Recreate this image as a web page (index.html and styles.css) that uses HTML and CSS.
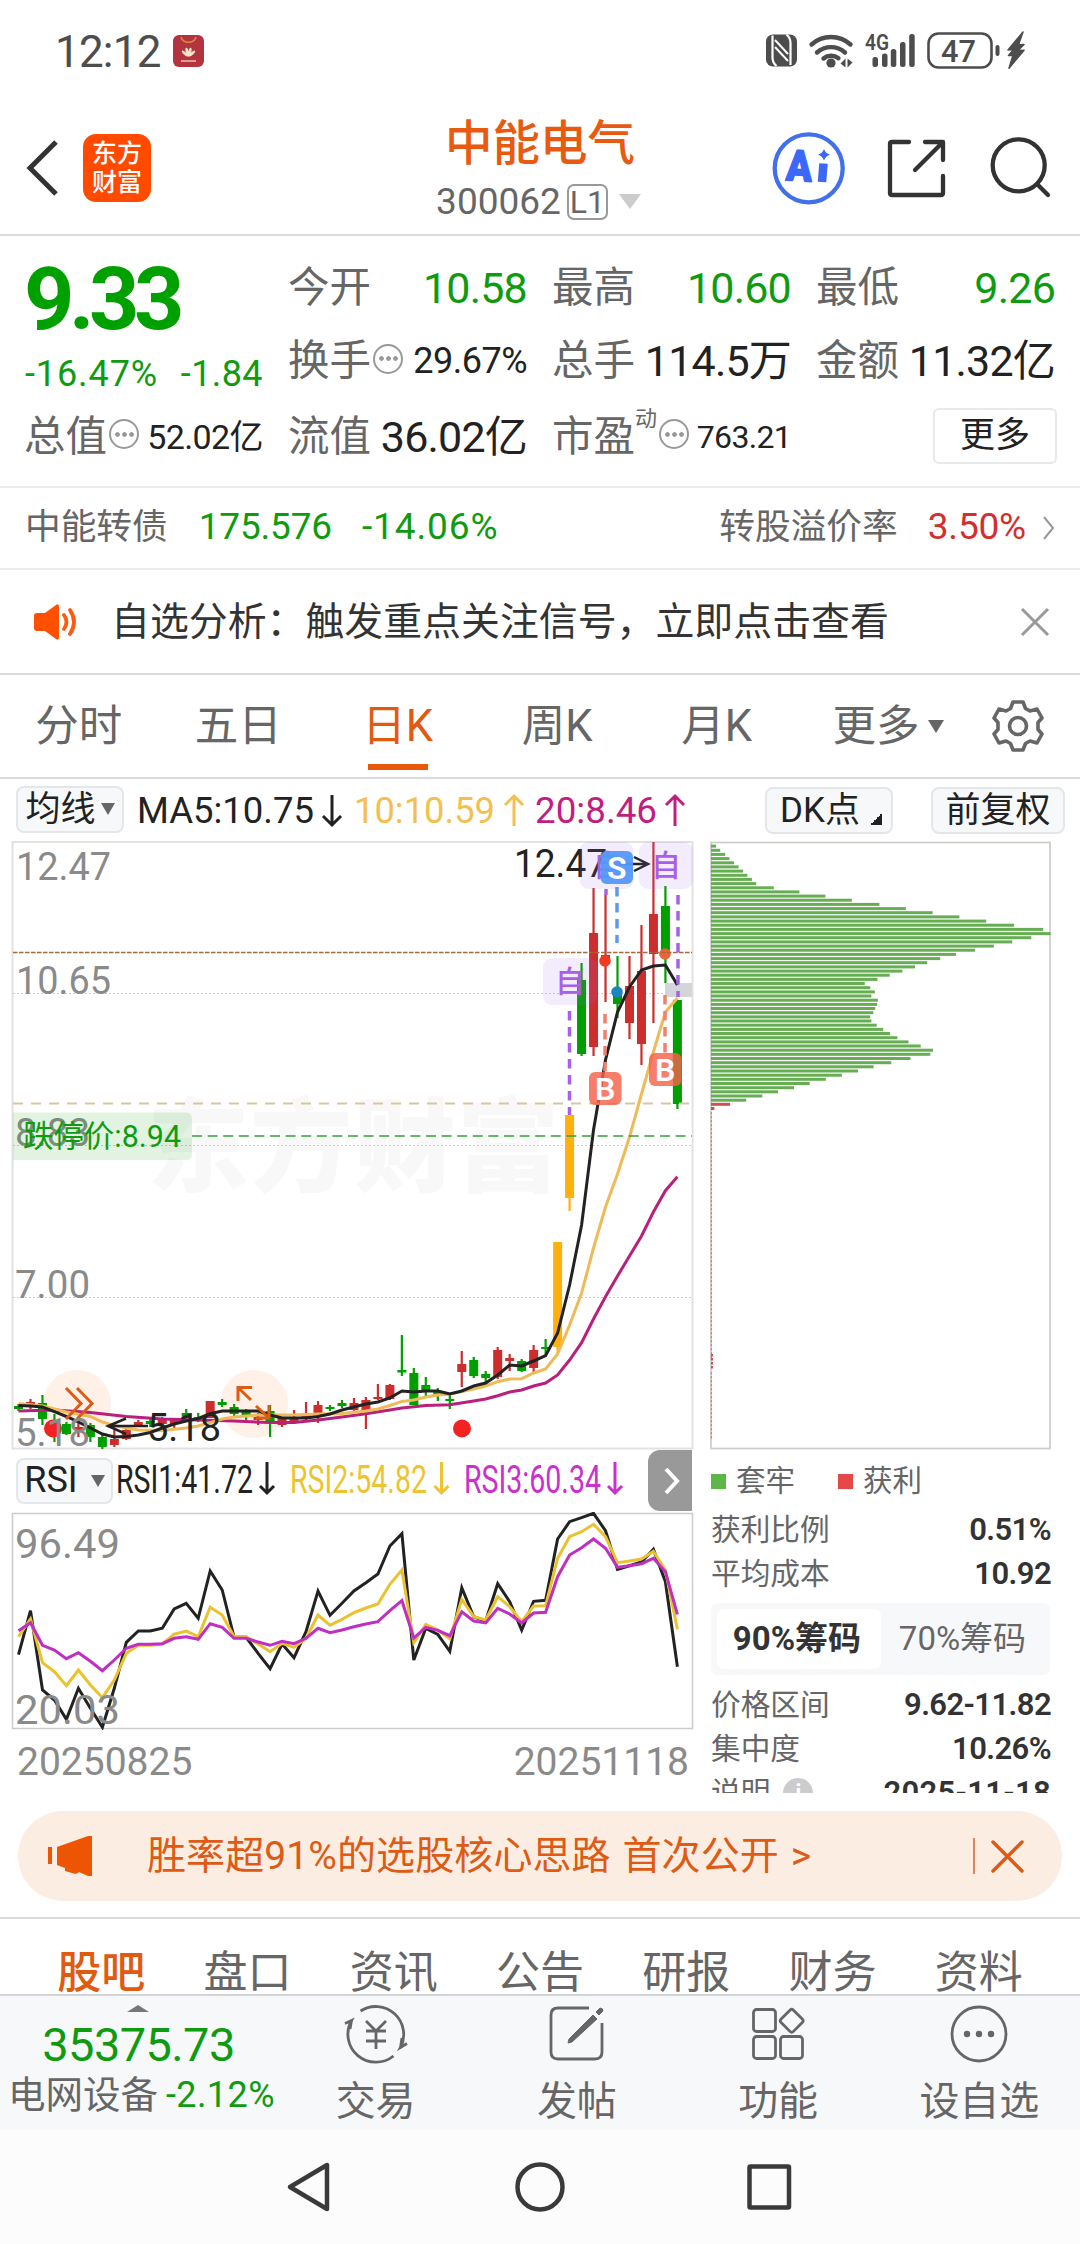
FILE: index.html
```html
<!DOCTYPE html>
<html lang="zh-CN">
<head>
<meta charset="utf-8">
<title>中能电气 300062</title>
<link rel="stylesheet" href="styles.css">
</head>
<body>
<div class="statusbar">
  <span class="clock">12:12</span>
  <svg class="hw" width="31" height="32" viewBox="0 0 31 32"><rect width="31" height="32" rx="6" fill="#b3333f"/><path d="M8 2C10 9 21 9 23 2" fill="none" stroke="#d98c3c" stroke-width="1.5"/><g fill="#fbe3cf"><ellipse cx="15.500" cy="17" rx="1.500" ry="4.500" transform="rotate(-14 15.500 22)"/><ellipse cx="15.500" cy="17" rx="1.500" ry="4.500" transform="rotate(14 15.500 22)"/><ellipse cx="15.500" cy="17" rx="1.300" ry="4" transform="rotate(-46 15.500 22)"/><ellipse cx="15.500" cy="17" rx="1.300" ry="4" transform="rotate(46 15.500 22)"/><rect x="8" y="25" width="15" height="2" opacity=".6"/></g></svg>
  <svg class="sys" width="262" height="40" viewBox="764 30 262 40">
    <g fill="#4d4d4d">
      <rect x="766" y="34.500" width="31" height="32" rx="7"/>
      <path d="M772.500 35.500v22q0 5 4 8.500M790.500 65v-22q0-5-4-8.500" fill="none" stroke="#fff" stroke-width="2.200"/>
      <path d="M775 40l13 14M775 47l13 14" fill="none" stroke="#fff" stroke-width="2"/>
      <circle cx="831" cy="63" r="4.600"/>
      <path d="M845.500 67.500v-9l-5 5zM847.500 58.500v9l5-5z"/>
      <path d="M811.500 44.500a29 29 0 0 1 39 0M817 52.500a21 21 0 0 1 28 0M823.500 58.500a12 12 0 0 1 15 -.3" fill="none" stroke="#4d4d4d" stroke-width="4.400" stroke-linecap="round"/>
      <rect x="872.500" y="57" width="5.500" height="10" rx="2.500"/><rect x="882" y="53.500" width="5.500" height="13.500" rx="2.500"/><rect x="890.800" y="49" width="5.500" height="18" rx="2.500"/><rect x="900" y="42" width="5.500" height="25" rx="2.500"/><rect x="909.200" y="34" width="5.500" height="33" rx="2.500"/>
      <text x="865" y="50" font-size="22" font-weight="600" textLength="24" lengthAdjust="spacingAndGlyphs">4G</text>
      <rect x="928.500" y="33.500" width="63" height="34" rx="10" fill="none" stroke="#4d4d4d" stroke-width="2.600"/>
      <rect x="995.500" y="45" width="4" height="11" rx="2"/>
      <text x="941" y="62" font-size="32" font-weight="500" textLength="35" lengthAdjust="spacingAndGlyphs">47</text>
      <path d="M1023 32l-15 18 5.500-.5-5 6 4.500-.3-4 13 15-18-6 .3 6-6-5.500.2z" stroke="#4d4d4d" stroke-width="1.500" stroke-linejoin="round"/>
    </g>
  </svg>
</div>

<header class="header">
  <svg class="back" width="34" height="60" viewBox="0 0 34 60"><path d="M31 4L5 30l26 26" fill="none" stroke="#333" stroke-width="5"/></svg>
  <div class="logo"><span>东方</span><span>财富</span></div>
  <div class="title">
    <h1>中能电气</h1>
    <p><span>300062</span><b>L1</b><i></i></p>
  </div>
  <svg class="acts" width="290" height="80" viewBox="770 128 290 80" fill="none" stroke="#333" stroke-width="4.300" stroke-linecap="round" stroke-linejoin="round">
    <circle cx="808.700" cy="168.300" r="34" stroke="#4270ea"/>
    <text x="786" y="181" class="ai" textLength="26" lengthAdjust="spacingAndGlyphs" transform="rotate(3 800 170)">A</text>
    <path d="M823.500 163.500l-1.500 18.500" stroke="#3b68f8" stroke-width="8.500" stroke-linecap="butt"/>
    <path d="M824 149q1.700 4.500 6 5.500-4.300 1.500-6 6-1.700-4.500-6-6 4.300-1 6-5.500z" fill="#3b68f8" stroke="none"/>
    <path d="M909 142h-17q-2 0-2 2v49q0 2 2 2h49q2 0 2-2v-17M925 142h18v18M941 144l-26 26"/>
    <circle cx="1018.700" cy="165.300" r="26"/><path d="M1037 184l11 11"/>
  </svg>
</header>

<section class="quote">
  <div class="price">9.33</div>
  <div class="chg"><span>-16.47%</span><span>-1.84</span></div>
  <div class="cell a1"><label>今开</label><span class="dn">10.58</span></div>
  <div class="cell b1"><label>最高</label><span class="dn">10.60</span></div>
  <div class="cell c1"><label>最低</label><span class="dn">9.26</span></div>
  <div class="cell a2"><label>换手<em></em></label><span class="mid">29.67%</span></div>
  <div class="cell b2"><label>总手</label><span>114.5万</span></div>
  <div class="cell c2"><label>金额</label><span>11.32亿</span></div>
  <div class="cell z3"><label>总值<em></em></label><span class="sm">52.02亿</span></div>
  <div class="cell a3"><label>流值</label><span>36.02亿</span></div>
  <div class="cell b3"><label>市盈<sup>动</sup><em></em></label><span class="xs">763.21</span></div>
  <button class="more">更多</button>
</section>

<section class="bond">
  <span>中能转债</span><span class="dn p">175.576</span><span class="dn q">-14.06%</span>
  <span class="r">转股溢价率</span><span class="up">3.50%</span>
  <svg width="12" height="24" viewBox="0 0 12 24"><path d="M1 1l9 11-9 11" fill="none" stroke="#999" stroke-width="2"/></svg>
</section>

<section class="notice">
  <svg width="46" height="38" viewBox="0 0 46 38"><path d="M4 10h8L23 2q3-2 3 2v30q0 4-3 2l-11-8H4q-3 0-3-3V13q0-3 3-3z" fill="#ff5000"/><path d="M31 12q5 7 0 14M37 7q8 12 0 24" fill="none" stroke="#ff5a10" stroke-width="3.800" stroke-linecap="round"/></svg>
  <span>自选分析：触发重点关注信号，立即点击查看</span>
  <svg width="30" height="30" viewBox="0 0 30 30"><path d="M2 2l26 26M28 2L2 28" stroke="#999" stroke-width="3"/></svg>
</section>

<nav class="periods">
  <span>分时</span><span>五日</span><span class="on">日K</span><span>周K</span><span>月K</span><span class="mr">更多<i></i></span>
  <svg width="54" height="54" viewBox="-27 -27 54 54" fill="none" stroke="#666" stroke-width="3.600" stroke-linejoin="round"><path d="M-5-24H5L7.500-17.500L12-15L19-17L24-8L20-3.500V3.500L24 8L19 17L12 15L7.500 17.500L5 24H-5L-7.500 17.500L-12 15L-19 17L-24 8L-20 3.500V-3.500L-24-8L-19-17L-12-15L-7.500-17.500Z"/><circle r="8.500"/></svg>
</nav>

<div class="ma">
  <button class="pill">均线<i></i></button>
  <svg class="vals" width="560" height="48" viewBox="136 784 560 48" font-size="37">
    <text x="137" y="822" fill="#222" textLength="177" lengthAdjust="spacingAndGlyphs">MA5:10.75</text>
    <path d="M332 794v30M323 815l9 9 9-9" class="ar" stroke="#222"/>
    <text x="354" y="822" fill="#f3bf4f" textLength="141" lengthAdjust="spacingAndGlyphs">10:10.59</text>
    <path d="M514 825v-30M505 804l9-9 9 9" class="ar" stroke="#f3bf4f"/>
    <text x="535" y="822" fill="#c01f80" textLength="122" lengthAdjust="spacingAndGlyphs">20:8.46</text>
    <path d="M675 825v-30M666 804l9-9 9 9" class="ar" stroke="#c01f80"/>
  </svg>
  <button class="pill dk">DK点<i></i></button>
  <button class="pill fq">前复权</button>
</div>

<main class="charts">
  <div class="left">
    <svg id="kline" width="684" height="609" viewBox="10 841 684 609"></svg>
    <div class="rsihead">
      <button class="pill rs">RSI<i></i></button>
      <svg width="520" height="48" viewBox="114 1458 520 48" font-size="38">
        <text x="116" y="1493.500" fill="#222" textLength="137" lengthAdjust="spacingAndGlyphs">RSI1:41.72</text>
        <path d="M267 1463v31M260 1487l7 7 7-7" class="ar" stroke="#222"/>
        <text x="290" y="1493.500" fill="#edc42f" textLength="137" lengthAdjust="spacingAndGlyphs">RSI2:54.82</text>
        <path d="M441.500 1463v31M434.500 1487l7 7 7-7" class="ar" stroke="#edc42f"/>
        <text x="464" y="1493.500" fill="#c930cc" textLength="137" lengthAdjust="spacingAndGlyphs">RSI3:60.34</text>
        <path d="M615 1463v31M608 1487l7 7 7-7" class="ar" stroke="#c930cc"/>
      </svg>
      <button class="next"><svg width="18" height="30" viewBox="0 0 18 30"><path d="M3 3l11 12L3 27" fill="none" stroke="#fff" stroke-width="4"/></svg></button>
    </div>
    <svg id="rsi" width="684" height="218" viewBox="10 1512 684 218"></svg>
    <div class="dates"><span>20250825</span><span>20251118</span></div>
  </div>
  <aside class="right">
    <svg id="chips" width="342" height="609" viewBox="710 841 342 609"></svg>
    <div class="legend"><i class="g"></i><span>套牢</span><i class="rd"></i><span>获利</span></div>
    <div class="stat"><span>获利比例</span><b>0.51%</b></div>
    <div class="stat"><span>平均成本</span><b>10.92</b></div>
    <div class="seg"><b>90%筹码</b><span>70%筹码</span></div>
    <div class="stat"><span>价格区间</span><b>9.62-11.82</b></div>
    <div class="stat"><span>集中度</span><b>10.26%</b></div>
    <div class="stat"><span>说明<em>i</em></span><b class="date">2025-11-18</b></div>
  </aside>
</main>

<section class="banner">
  <svg width="46" height="42" viewBox="0 0 46 42" fill="#ed5503"><rect x="0" y="12" width="4" height="17"/><path d="M9 12L40 1h4v40h-4l-9-4q-2 3-7 1l-7-2v-3l-8-3z"/></svg>
  <span>胜率超91%的选股核心思路 首次公开 &gt;</span>
  <i></i>
  <svg width="33" height="33" viewBox="0 0 33 33"><path d="M2 2l29 29M31 2L2 31" stroke="#dd5b14" stroke-width="3.500" stroke-linecap="round"/></svg>
</section>

<nav class="tabs"><span class="on">股吧</span><span>盘口</span><span>资讯</span><span>公告</span><span>研报</span><span>财务</span><span>资料</span></nav>

<footer class="dock">
  <div class="index"><i></i><b>35375.73</b><p>电网设备<span>-2.12%</span></p></div>
  <div class="item"><svg width="70" height="60" viewBox="-35 -30 70 60"><path d="M-15.500-23A28 28 0 0 1 24.500 13.500L31 9.500M24.500 13.500L26 4M17.500 22A28 28 0 0 1-24.500-13.500L-31-10.500M-24.500-13.500L-26-5"/><path d="M-10-13L0-3 10-13M-10-3H10M-10 7H10M0-3V15"/></svg><span>交易</span></div>
  <div class="item"><svg width="70" height="60" viewBox="-35 -30 70 60"><path d="M12-26H-19q-7 0-7 7V18q0 7 7 7H18q7 0 7-7V-11"/><path d="M16-19l4 4L-5 8-9 9-8 5zM19-22l4-4q3 0 3 3l-4 4z" fill="#666" stroke-width="1"/></svg><span>发帖</span></div>
  <div class="item"><svg width="70" height="60" viewBox="-35 -30 70 60"><rect x="-24.500" y="-24.500" width="22" height="22" rx="3"/><rect x="-24.500" y="2.500" width="22" height="22" rx="3"/><rect x="2.500" y="2.500" width="22" height="22" rx="3"/><rect x="5" y="-22" width="17.500" height="17.500" rx="2.500" transform="rotate(45 13.700 -13.300)"/></svg><span>功能</span></div>
  <div class="item"><svg width="70" height="60" viewBox="-35 -30 70 60"><circle r="27"/><g fill="#666" stroke="none"><circle cx="-12" r="3.200"/><circle r="3.200"/><circle cx="12" r="3.200"/></g></svg><span>设自选</span></div>
</footer>

<div class="sysnav">
  <svg width="1080" height="114" viewBox="0 2130 1080 114" fill="none" stroke="#3a3a3a" stroke-width="4.500" stroke-linejoin="round"><path d="M327 2165v44L290 2187z"/><circle cx="540" cy="2187" r="22.500"/><rect x="749.500" y="2166.500" width="39.500" height="41" rx="1"/></svg>
</div>
<script src="charts.js"></script>
</body>
</html>
```
FILE: styles.css
```css
* { box-sizing: border-box; }
body { margin: 0; width: 1080px; height: 2244px; overflow: hidden; background: #fff; color: #333; font-family: Roboto, "Noto Sans CJK SC", sans-serif; display: flex; flex-direction: column; }
h1, p { margin: 0; font-weight: 400; }
i, em, sup { font-style: normal; }
button { font-family: inherit; padding: 0; margin: 0; }
svg { display: block; flex: none; }
svg text { font-family: Roboto, "Noto Sans CJK SC", sans-serif; }
.ar { fill: none; stroke-width: 3; }
.dn { color: #0f9b0f; }
.up { color: #d32f2f; }

.statusbar { height: 100px; display: flex; align-items: center; padding-left: 55px; }
.clock { font-size: 44px; line-height: 44px; letter-spacing: -.8px; color: #4d4d4d; width: 118px; margin-top: 4px; }
.hw { margin-top: 2px; }
.sys { margin-left: auto; margin-right: 54px; }

.header { height: 136px; border-bottom: 2px solid #dadada; display: flex; padding-top: 28px; }
.back { margin: 10px 0 0 25px; }
.logo { width: 68px; height: 68px; margin: 6px 0 0 24px; border-radius: 13px; background: #ff4a00; color: #fff; display: flex; flex-direction: column; align-items: center; justify-content: center; font-size: 25px; font-weight: 500; line-height: 29px; }
.title { width: 400px; margin-left: 189px; display: flex; flex-direction: column; align-items: center; margin-top: -9px; }
.title h1 { font-size: 47.500px; line-height: 50px; color: #e85a10; font-weight: 500; }
.title p { display: flex; align-items: center; height: 40px; margin-top: 13px; font-size: 37px; line-height: 40px; color: #666; margin-left: -3px; }
.title p b { width: 41px; height: 36px; margin-left: 6px; border: 2px solid #999; border-radius: 7px; font-size: 32px; font-weight: 400; line-height: 33px; text-align: center; }
.title p i { margin-left: 11px; border: 11px solid transparent; border-top: 15px solid #ccc; border-bottom: 0; }
.acts { margin-left: 30px; }
.ai { font-size: 43px; font-weight: 900; fill: #3b68f8; stroke: #3b68f8; stroke-width: 1.5px; }

.quote { height: 252px; border-bottom: 2px solid #ececec; padding: 17px 25px 0; display: grid; grid-template-columns: 238px 238px 238px 238px; column-gap: 26px; grid-template-rows: 70px 77px 74px; color: #222; }
.price { grid-area: 1 / 1; height: 96px; font-size: 88px; font-weight: 700; line-height: 92px; letter-spacing: -5.500px; margin-left: -1px; color: #00a000; }
.chg { grid-area: 2 / 1; display: flex; justify-content: space-between; align-items: center; font-size: 36px; line-height: 40px; letter-spacing: .4px; padding-top: 26px; color: #0f9b0f; }
.chg span:first-child { letter-spacing: .9px; }
.cell { display: flex; align-items: center; justify-content: space-between; white-space: nowrap; font-size: 43px; line-height: 46px; letter-spacing: -.8px; }
.cell label { display: flex; align-items: center; font-size: 41.500px; color: #666; letter-spacing: 0; margin-left: -1px; }
.cell em { width: 30px; height: 30px; border: 2px solid #999; border-radius: 50%; margin: -5px 0 0 2px; background: radial-gradient(circle, #999 2px, transparent 2.600px) 9.500px 9.500px / 7px 7px no-repeat, radial-gradient(circle, #999 2px, transparent 2.600px) 2.500px 9.500px / 7px 7px no-repeat, radial-gradient(circle, #999 2px, transparent 2.600px) 16.500px 9.500px / 7px 7px no-repeat; }
.cell sup { width: 22px; font-size: 22px; line-height: 24px; margin-top: -36px; }
.cell .mid { font-size: 36px; letter-spacing: -.5px; }
.cell .sm { font-size: 34px; letter-spacing: -.6px; }
.cell .xs { font-size: 32px; letter-spacing: -.7px; }
.a1 { grid-area: 1 / 2; } .b1 { grid-area: 1 / 3; } .c1 { grid-area: 1 / 4; }
.a2 { grid-area: 2 / 2; } .b2 { grid-area: 2 / 3; } .c2 { grid-area: 2 / 4; }
.z3 { grid-area: 3 / 1; } .a3 { grid-area: 3 / 2; } .b3 { grid-area: 3 / 3; }
.more { grid-area: 3 / 4; justify-self: end; align-self: center; width: 124px; height: 56px; margin-right: -2px; margin-top: -2px; border: 2px solid #e6eaea; border-radius: 6px; background: #fff; font-size: 35px; line-height: 48px; color: #222; }

.bond { height: 82px; border-bottom: 2px solid #ececec; display: flex; align-items: center; padding: 0 25px 1px 25px; font-size: 35.700px; line-height: 40px; color: #666; }
.bond .dn, .bond .up { font-size: 37px; }
.bond .p { margin-left: 31px; letter-spacing: -.2px; } .bond .q { margin-left: 30px; letter-spacing: .9px; }
.bond .r { margin-left: auto; } .bond .up { margin-left: 30px; letter-spacing: -.2px; }
.bond svg { margin-left: 17px; margin-top: 2px; }

.notice { height: 105px; border-bottom: 2px solid #dadada; display: flex; align-items: center; padding: 2px 30px 0 33px; font-size: 38.900px; line-height: 44px; }
.notice span { margin-left: 32px; flex: 1; }

.periods { height: 104px; border-bottom: 2px solid #dadada; display: flex; align-items: center; font-size: 43.500px; line-height: 48px; color: #666; }
.periods span { width: 159.500px; height: 102px; display: flex; justify-content: center; align-items: center; flex: none; padding: 2px 2px 0 0; }
.periods .on { color: #e05a12; background: linear-gradient(#e8590c, #e8590c) 49px 89px / 60px 6px no-repeat; }
.periods .mr { justify-content: flex-start; padding-left: 35px; width: 193px; }
.mr i { border: 8px solid transparent; border-top: 13px solid #666; border-bottom: 0; margin-left: 8px; }

.ma { height: 62px; display: flex; padding: 7px 0 0 16px; }
.pill { height: 47px; border: 2px solid #e3e6ea; border-radius: 8px; background: #f7f8fa; color: #222; font-size: 35px; line-height: 43px; display: flex; align-items: center; justify-content: center; white-space: nowrap; width: 108px; }
.pill i { border: 7px solid transparent; border-top: 12px solid #666; border-bottom: 0; margin-left: 5px; }
.vals { margin: -1px 0 0 12px; }
.pill.dk { margin-left: 69px; width: 128px; margin-top: 1px; }
.dk i { border: 0; width: 12px; height: 12px; background: linear-gradient(135deg, transparent 50%, #222 50%); margin: 18px -4px 0 10px; }
.pill.fq { margin-left: 38px; width: 134px; margin-top: 1px; }

.charts { display: flex; height: 953px; overflow: hidden; padding-left: 10px; }
.left { width: 684px; }
.rsihead { height: 62px; display: flex; align-items: center; }
.rs { width: 97px; height: 46px; margin-left: 6px; font-size: 36px; }
.rs i { margin-left: 13px; }
.rsihead > svg { margin-left: 1px; }
.next { width: 44px; height: 61px; margin-left: auto; margin-right: 2px; border: 0; background: #999; border-radius: 12px 0 0 12px; display: flex; align-items: center; justify-content: center; padding-left: 4px; }
.dates { display: flex; justify-content: space-between; padding: 10px 5px 0 7px; font-size: 39px; line-height: 44px; color: #8a8a8a; }
.right { margin-left: 16px; width: 342px; }
.right > div { margin-left: 1px; width: 339px; }
.legend { height: 57px; display: flex; align-items: center; font-size: 29.500px; line-height: 36px; color: #666; padding-top: 6px; }
.legend i { width: 15px; height: 15px; margin-right: 10px; background: #5fb648; }
.legend .rd { background: #e64848; margin-left: 43px; }
.stat { height: 44px; display: flex; justify-content: space-between; align-items: center; font-size: 29.700px; line-height: 36px; color: #666; padding-top: 2px; }
.stat b { font-size: 31px; color: #333; font-weight: 600; letter-spacing: -.6px; margin-right: -1px; }
.stat .date { letter-spacing: .3px; }
.stat span { display: flex; align-items: center; }
.stat em { width: 30px; height: 30px; margin-left: 13px; border-radius: 50%; background: #ccc; color: #fff; font-weight: 700; font-size: 22px; line-height: 30px; text-align: center; }
.seg { height: 72px; margin: 8px 0 7px; display: flex; background: #f7f8fa; border-radius: 7px; padding: 6px; font-size: 32px; line-height: 60px; color: #666; text-align: center; white-space: nowrap; }
.seg b { width: 164px; background: #fff; border-radius: 7px; color: #333; font-size: 33px; padding-right: 4px; }
.seg span { flex: 1; font-size: 33px; }

.banner { height: 90px; margin: 18px 18px 16px; border-radius: 45px; background: #fcede3; display: flex; align-items: center; padding: 0 38px 0 30px; font-size: 39px; line-height: 44px; color: #dd5b14; white-space: nowrap; }
.banner span { margin-left: 53px; flex: 1; letter-spacing: .1px; word-spacing: 2px; }
.banner i { width: 2px; height: 36px; background: #dd8a5a; margin-right: 16px; }

.tabs { height: 77px; border-top: 2px solid #dadada; display: flex; padding: 30px 28px 0; font-size: 44px; line-height: 48px; color: #666; }
.tabs span { flex: 1; text-align: center; height: 45px; }
.tabs .on { color: #e05a12; font-weight: 500; }

.dock { height: 136px; border-top: 2px solid #d4d5d9; background: #f7f8fa; display: flex; color: #666; }
.index { width: 275px; display: flex; flex-direction: column; align-items: center; }
.index i { margin-top: 9px; border: 11px solid transparent; border-bottom: 7px solid #777; border-top: 0; }
.index b { font-size: 47px; font-weight: 400; line-height: 50px; margin-top: 8px; color: #0f9b0f; letter-spacing: -.6px; padding-left: 2px; }
.index p { font-size: 37.500px; line-height: 42px; display: flex; align-items: center; align-self: flex-start; margin: 4px 0 0 8px; white-space: nowrap; }
.index p span { font-size: 36px; color: #0f9b0f; margin-left: 8px; letter-spacing: .4px; }
.item { flex: 1; display: flex; flex-direction: column; align-items: center; font-size: 40px; line-height: 46px; padding-top: 8px; }
.item svg { fill: none; stroke: #666; stroke-width: 2.800px; }
.item span { margin-top: 15px; }
.sysnav { height: 114px; background: #fcfcfc; }
```
FILE: charts.js
```js
const X = i => 18.5 + 11.98 * i;
const UP = '#cc2d2d', DOWN = '#009e00', LIMIT = '#ffb00d';
const points = list => list.map(([i, y]) => X(i).toFixed(1) + ',' + y).join(' ');
const line = (pts, color, w = 3) => `<polyline points="${pts}" fill="none" stroke="${color}" stroke-width="${w}"/>`;
const label = (x, y, text, w, color = '#8a8a8a', size = 39) =>
  `<text x="${x}" y="${y}" font-size="${size}" fill="${color}" textLength="${w}" lengthAdjust="spacingAndGlyphs">${text}</text>`;
const rule = (x1, y, x2, color, dash, w = 1.5) =>
  `<path d="M${x1} ${y}H${x2}" stroke="${color}" stroke-width="${w}" stroke-dasharray="${dash}"/>`;
const drop = (x, y1, y2, color) => `<path d="M${x} ${y1}V${y2}" stroke="${color}" stroke-width="3.500" stroke-dasharray="9.500 6.500"/>`;

// colour, wick top, body top, body bottom, wick bottom
const candles = [
  ['g',1404,1406,1409,1411],['r',1399,1402,1406,1409],['g',1395,1403,1419,1425],['g',1414,1423,1436,1442],
  ['g',1422,1424,1434,1435],['r',1423,1427,1430,1437],['g',1423,1425,1437,1442],['g',1435,1437,1447,1449],
  ['r',1430,1439,1445,1447],['r',1428,1430,1439,1440],['r',1420,1422,1425,1427],['g',1418,1421,1424,1427],
  ['r',1417,1420,1424,1427],['r',1418,1419,1424,1428],['g',1409,1413,1416,1418],['g',1413,1417,1419,1422],
  ['r',1401,1401,1418,1418],['g',1399,1402,1405,1407],['g',1404,1407,1414,1416],['g',1409,1411,1416,1420],
  ['r',1413,1417,1420,1425],['g',1405,1411,1422,1437],['r',1417,1418,1425,1427],['r',1410,1418,1421,1424],
  ['r',1402,1415,1418,1420],['r',1401,1405,1413,1423],['g',1405,1407,1409,1411],['g',1400,1403,1406,1408],
  ['r',1398,1403,1410,1411],['r',1397,1400,1411,1429],['r',1384,1397,1399,1400],['r',1384,1385,1399,1400],
  ['g',1335,1370,1372.5,1376],['g',1368,1373,1405,1405],['g',1377,1385,1391,1396],['g',1388,1391,1395,1401],
  ['g',1395,1399,1401,1409],['r',1351,1364,1372,1387],['g',1357,1360,1376,1378],['g',1371,1374,1378,1382],
  ['r',1347,1350,1377,1379],['r',1354,1358,1361,1371],['g',1359,1361,1371,1372],['r',1345,1350,1368,1372],
  ['g',1339,1347,1349,1357],['y',1242,1242,1347,1353],['y',1115,1115,1208,1211],['g',963,980,1054,1056],
  ['r',888,933,1047,1056],['r',894,955,964,1002],['g',956,993,1004,1018],['r',956,986,1023,1039],
  ['r',925,971,1044,1065],['r',842,914,954,1023],['g',886,906,951,983],['g',1000,1000,1104,1109]
];
candles[46][3] = 1198;
const colors = { r: UP, g: DOWN, y: LIMIT };

const ma5 = [1405.5,1406,1407,1411.6,1416.5,1422,1428,1434,1437,1436.5,1435,1432.5,1428,1424,1421,1418.5,1413.7,1411,1411,1411,1411,1415,1418,1418,1418,1416.5,1414,1410,1407,1404,1402,1398,1391,1392,1391,1391,1394,1391,1386,1383,1375,1365,1366,1361,1355.7,1333,1285,1225,1130,1060,1012,987,970,966,965,985].map((y, i) => [i, y]);
const ma10 = [[0,1403.5],[2,1406],[4,1412],[6,1416.5],[7,1422],[8,1425.5],[9,1428],[10,1430],[12,1430.4],[14,1428],[15,1426],[16,1422.6],[17,1419],[18,1417],[20,1415],[23,1415],[25,1414],[27,1413.5],[29,1411],[30,1409],[31,1405.5],[32,1401.4],[33,1400],[34,1397],[35,1395],[36,1394],[37,1391.6],[38,1389],[39,1386],[40,1381.7],[41,1379],[42,1378.7],[43,1373],[44,1369],[45,1354],[46,1325],[47,1293],[48,1248],[49,1207],[50,1174],[51,1137],[52,1094],[53,1052],[54,1012],[55,998]];
const ma20 = [[0,1411],[3,1410],[6,1412.5],[9,1416.5],[12,1419],[15,1420],[18,1421],[21,1422.6],[23,1422.6],[25,1420],[27,1417],[29,1413.7],[31,1410],[32,1408],[34,1405.5],[36,1404.7],[38,1401],[39,1399],[40,1395.7],[41,1392],[42,1390],[43,1386],[44,1383],[45,1375],[46,1360],[47,1342.7],[48,1319],[49,1296.7],[50,1276],[51,1256],[52,1236],[53,1212],[54,1190.7],[55,1176.7]];

const flag = (x, y) => `<rect x="${x}" y="${y}" width="54" height="47" rx="9" fill="#a56cf0" fill-opacity=".13"/>`;
const own = (x, y) => `<text x="${x}" y="${y}" font-size="30" font-weight="500" fill="#a860e8">自</text>`;
const badge = (x, y, t, c, o = 1) => `<rect x="${x}" y="${y}" width="32.500" height="33" rx="6" fill="${c}" fill-opacity="${o}"/><text x="${x + 16.25}" y="${y + 28}" font-size="32" font-weight="600" fill="#fff" text-anchor="middle">${t}</text>`;

document.getElementById('kline').innerHTML =
  `<rect x="12.500" y="842" width="680" height="606.500" fill="#fff" stroke="#e2e2e2" stroke-width="2"/>
  <text x="147" y="1184" font-size="102" font-weight="900" fill="#f8f8f8" textLength="412">东方财富</text>` +
  [993.5, 1145.5, 1297.5].map(y => rule(13, y, 692, '#ccc', '2 2', 1)).join('') +
  `<circle cx="77" cy="1404" r="34" fill="#fff0e8"/><circle cx="254" cy="1404" r="34" fill="#fff0e8"/>` +
  candles.map(([k, t, a, b, l], i) => `<path d="M${X(i)} ${t}V${l}" stroke="${colors[k]}" stroke-width="2.200"/><rect x="${X(i) - 4.5}" y="${a}" width="9" height="${Math.max(b - a, 2)}" fill="${colors[k]}"/>`).join('') +
  `<circle cx="605" cy="961" r="5.800" fill="#f03a24"/><circle cx="617" cy="992" r="5.800" fill="#1a86bd"/><circle cx="665" cy="954" r="5.800" fill="#e8653a"/>` +
  `<rect x="665" y="983" width="27" height="14" fill="#d2d5da"/>` +
  label(514, 877, '12.47', 93, '#222') + `<path d="M612 864H648M634 857L648 864L634 871" fill="none" stroke="#222" stroke-width="2.500"/>` +
  line(points(ma20), '#b8207c') + line(points(ma10), '#eebb58') + line(points(ma5), '#222') +
  rule(13, 952.5, 692, '#a8693a', '4.500 1.500') + rule(13, 1103.500, 692, '#dcc3a0', '10 8', 2) + rule(192, 1136, 692, '#36a036', '10 5.600') +
  drop(569.5, 1011, 1115, '#a860e8') + drop(606, 889, 895, '#a860e8') + drop(678, 895, 997, '#a860e8') +
  drop(617, 887, 943, '#5b9ce8') + drop(605, 1014, 1072, '#f08070') + drop(665, 995, 1053, '#f08070') +
  flag(579.5, 842) + flag(639, 842) + flag(543, 958) + own(593, 876) + own(651, 876) + own(555, 992) +
  badge(600.5, 851, 'S', '#5398fb', .95) + badge(589, 1072, 'B', '#f7614c', .82) + badge(649, 1053, 'B', '#f7614c', .82) +
  `<circle cx="53" cy="1428.500" r="9" fill="#f22222"/><circle cx="462" cy="1428.500" r="9" fill="#f22222"/>` +
  `<path d="M66 1388L81 1403.500L66 1419M77 1388L92 1403.500L77 1419M252 1387.500H238V1401M238 1387.500L251 1400M269 1405V1418H256M269 1418L256 1406" fill="none" stroke="#dd5b14" stroke-width="3"/>` +
  label(16, 879.5, '12.47', 95) + label(16, 993.5, '10.65', 95) + label(15, 1145.5, '8.83', 75) + label(15, 1297.5, '7.00', 75) + label(15, 1445.5, '5.18', 75) +
  label(147, 1440.5, '5.18', 74, '#222') + `<path d="M148 1426H108M126 1418.500L108 1426L126 1434" fill="none" stroke="#222" stroke-width="2.500"/>` +
  `<path d="M13 1112.500H186q6 0 6 6V1154q0 6-6 6H13z" fill="#0fa00f" fill-opacity=".12"/>` +
  label(23, 1146.5, '跌停价:8.94', 158, '#0f9b0f', 31);

const rsi1 = [644,512,750,780,838,745,805,862,745,607,573,573,565,507,490,535,393,450,592,592,640,686,612,653,575,453,526,490,453,428,402,318,281,660,565,583,634,443,530,543,431,485,570,484,481,297,245,233,220,272,388,377,366,328,425,680];
const rsi2 = [590,537,668,695,737,690,735,773,720,640,616,616,612,582,573,590,502,525,590,590,612,635,610,622,595,525,556,538,518,504,492,433,390,608,553,570,596,478,530,540,470,500,545,498,497,355,290,275,253,290,368,363,357,334,390,568];
const rsi3 = [572,548,616,630,656,638,664,692,660,625,613,613,611,595,590,598,551,562,595,595,606,616,604,611,595,565,578,570,560,552,545,512,482,594,562,571,587,515,543,549,505,522,549,519,517,410,345,323,297,325,382,377,371,355,395,523];
const rsiLine = (v, c) => line(points(v.map((y, i) => [i, (1440 + y / 3).toFixed(1)])), c, 3);
document.getElementById('rsi').innerHTML =
  `<rect x="12.500" y="1513.500" width="680" height="215" fill="#fff" stroke="#ccc" stroke-width="1.500"/>` +
  rsiLine(rsi1, '#222') + rsiLine(rsi2, '#eac22e') + rsiLine(rsi3, '#c02ec2') +
  label(15, 1557.5, '96.49', 105, '#8a8a8a', 41) + label(15, 1723.5, '20.03', 105, '#8a8a8a', 41);

const chips = [13,24,37,48,60,72,84,95,107,118,164,231,299,368,440,509,579,649,719,792,868,887,837,787,739,690,640,599,565,533,500,467,435,402,416,428,419,436,434,429,424,416,419,433,450,468,487,516,548,580,573,521,471,425,384,342,300,258,217,175,134,92,50,9];
document.getElementById('chips').innerHTML =
  `<rect x="711" y="842.500" width="339" height="606" fill="#fff" stroke="#ccc" stroke-width="1.700"/>` +
  chips.map((w, i) => `<rect x="711" y="${(844.6 + 4.165 * i).toFixed(1)}" width="${(w / 2.613).toFixed(1)}" height="3" fill="${i < 62 ? '#66ad54' : '#cc5252'}"/>`).join('') +
  `<path d="M711.300 1112V1360M711.300 1372V1440" stroke="#dd7a7a" stroke-width="1.200" stroke-dasharray="2.500 1.500"/><path d="M712 1354V1370" stroke="#cc5252" stroke-width="2" stroke-dasharray="2.500 1.500"/>`;
```
